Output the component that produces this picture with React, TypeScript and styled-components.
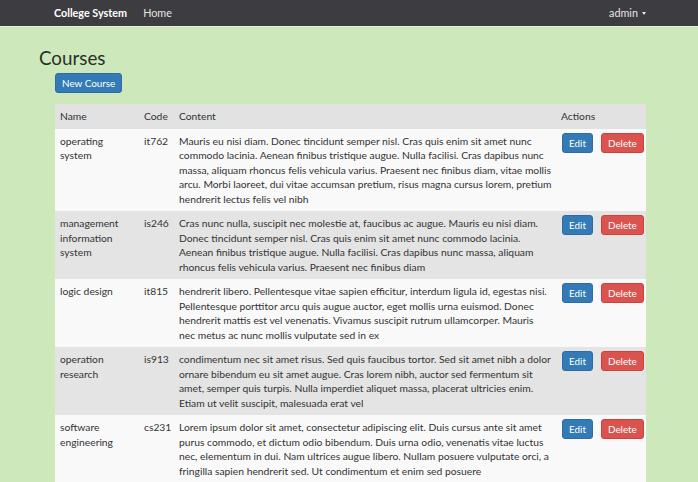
import React from "react";
import styled, { createGlobalStyle } from "styled-components";

const Global = createGlobalStyle`
  html, body { margin: 0; padding: 0; }
  body {
    background: #cde9bc;
    font-family: Lato, "Open Sans", sans-serif;
    color: #333;
    font-size: 10.3px;
    line-height: 14.5px;
  }
`;

const Navbar = styled.nav`
  height: 26px;
  background: #3d3c41;
  border-bottom: 1px solid #dff2d3;
`;

const NavInner = styled.div`
  width: 592px;
  margin-left: 54px;
  height: 26px;
  display: flex;
  align-items: center;
`;

const Brand = styled.span`
  color: #fff;
  font-weight: 700;
  font-size: 10.8px;
  margin-right: 16px;
`;

const NavLink = styled.span`
  color: #e6e6e6;
  font-size: 10.8px;
`;

const UserMenu = styled.span`
  margin-left: auto;
  color: #e6e6e6;
  font-size: 10.8px;
  display: flex;
  align-items: center;
  gap: 4px;
`;

const Caret = styled.span`
  width: 0;
  height: 0;
  border-left: 2.5px solid transparent;
  border-right: 2.5px solid transparent;
  border-top: 3px solid #e6e6e6;
  margin-top: 1px;
`;

const Container = styled.main`
  width: 591px;
  margin-left: 55px;
`;

const Title = styled.h1`
  font-size: 18.8px;
  font-weight: 400;
  color: #2a2f2a;
  margin: 19px 0 0 -16px;
  line-height: 24px;
`;

const Button = styled.button<{ $variant: "primary" | "danger" }>`
  font-family: Lato, "Open Sans", sans-serif;
  font-size: 9.9px;
  line-height: 14px;
  color: #fff;
  border: 1px solid ${(p) => (p.$variant === "primary" ? "#2e6da4" : "#d43f3a")};
  background: ${(p) => (p.$variant === "primary" ? "#337ab7" : "#d9534f")};
  border-radius: 3px;
  height: 20px;
  padding: 0 6px;
  cursor: pointer;
`;

const Toolbar = styled.div`
  margin-top: 3px;
  height: 20px;
  display: flex;
`;

const Table = styled.table`
  margin-top: 11px;
  width: 591px;
  border-collapse: collapse;
  table-layout: fixed;
`;

const HeadRow = styled.tr`
  background: #e2e2e2;
`;

const Th = styled.th`
  text-align: left;
  font-weight: 400;
  padding: 5px 5px;
  height: 14px;
  color: #333;
`;

const Row = styled.tr<{ $alt: boolean }>`
  background: ${(p) => (p.$alt ? "#e4e4e4" : "#f9f9f9")};
`;

const Td = styled.td`
  vertical-align: top;
  padding: 5px 5px;
`;

const ContentCell = styled.td`
  vertical-align: top;
  padding: 5px 2px 5px 5px;
`;

const Line = styled.span`
  display: block;
  white-space: nowrap;
`;

const ActionsCell = styled.td`
  vertical-align: top;
  padding: 4px 4px 0 6px;
`;

const Actions = styled.div`
  display: flex;
  gap: 8px;
`;

const courses = [
  {
    name: "operating system",
    code: "it762",
    content: [
      "Mauris eu nisi diam. Donec tincidunt semper nisl. Cras quis enim sit amet nunc",
      "commodo lacinia. Aenean finibus tristique augue. Nulla facilisi. Cras dapibus nunc",
      "massa, aliquam rhoncus felis vehicula varius. Praesent nec finibus diam, vitae mollis",
      "arcu. Morbi laoreet, dui vitae accumsan pretium, risus magna cursus lorem, pretium",
      "hendrerit lectus felis vel nibh",
    ],
  },
  {
    name: "management information system",
    code: "is246",
    content: [
      "Cras nunc nulla, suscipit nec molestie at, faucibus ac augue. Mauris eu nisi diam.",
      "Donec tincidunt semper nisl. Cras quis enim sit amet nunc commodo lacinia.",
      "Aenean finibus tristique augue. Nulla facilisi. Cras dapibus nunc massa, aliquam",
      "rhoncus felis vehicula varius. Praesent nec finibus diam",
    ],
  },
  {
    name: "logic design",
    code: "it815",
    content: [
      "hendrerit libero. Pellentesque vitae sapien efficitur, interdum ligula id, egestas nisi.",
      "Pellentesque porttitor arcu quis augue auctor, eget mollis urna euismod. Donec",
      "hendrerit mattis est vel venenatis. Vivamus suscipit rutrum ullamcorper. Mauris",
      "nec metus ac nunc mollis vulputate sed in ex",
    ],
  },
  {
    name: "operation research",
    code: "is913",
    content: [
      "condimentum nec sit amet risus. Sed quis faucibus tortor. Sed sit amet nibh a dolor",
      "ornare bibendum eu sit amet augue. Cras lorem nibh, auctor sed fermentum sit",
      "amet, semper quis turpis. Nulla imperdiet aliquet massa, placerat ultricies enim.",
      "Etiam ut velit suscipit, malesuada erat vel",
    ],
  },
  {
    name: "software engineering",
    code: "cs231",
    content: [
      "Lorem ipsum dolor sit amet, consectetur adipiscing elit. Duis cursus ante sit amet",
      "purus commodo, et dictum odio bibendum. Duis urna odio, venenatis vitae luctus",
      "nec, elementum in dui. Nam ultrices augue libero. Nullam posuere vulputate orci, a",
      "fringilla sapien hendrerit sed. Ut condimentum et enim sed posuere",
    ],
  },
];

export default function App() {
  return (
    <>
      <Global />
      <Navbar>
        <NavInner>
          <Brand>College System</Brand>
          <NavLink>Home</NavLink>
          <UserMenu>
            admin <Caret />
          </UserMenu>
        </NavInner>
      </Navbar>
      <Container>
        <Title>Courses</Title>
        <Toolbar>
          <Button $variant="primary">New Course</Button>
        </Toolbar>
        <Table>
          <colgroup>
            <col style={{ width: 84 }} />
            <col style={{ width: 35 }} />
            <col style={{ width: 382 }} />
            <col style={{ width: 90 }} />
          </colgroup>
          <thead>
            <HeadRow>
              <Th>Name</Th>
              <Th>Code</Th>
              <Th>Content</Th>
              <Th>Actions</Th>
            </HeadRow>
          </thead>
          <tbody>
            {courses.map((c, i) => (
              <Row key={c.code} $alt={i % 2 === 1}>
                <Td>{c.name}</Td>
                <Td>{c.code}</Td>
                <ContentCell>
                  {c.content.map((line, j) => (
                    <Line key={j}>{line}</Line>
                  ))}
                </ContentCell>
                <ActionsCell>
                  <Actions>
                    <Button $variant="primary">Edit</Button>
                    <Button $variant="danger">Delete</Button>
                  </Actions>
                </ActionsCell>
              </Row>
            ))}
          </tbody>
        </Table>
      </Container>
    </>
  );
}
